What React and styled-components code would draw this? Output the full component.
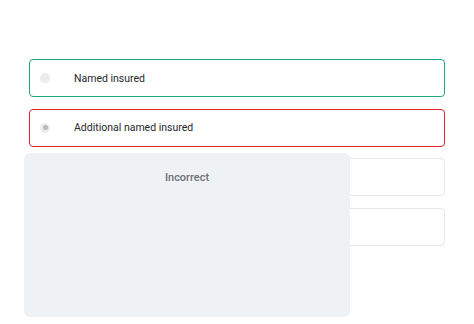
import React from "react";
import styled, { createGlobalStyle } from "styled-components";

const GlobalStyle = createGlobalStyle`
  html, body {
    margin: 0;
    padding: 0;
    background: #ffffff;
    font-family: Roboto, "Liberation Sans", sans-serif;
  }
`;

const Page = styled.div`
  position: relative;
  width: 474px;
  height: 324px;
  overflow: hidden;
  background: #fff;
`;

const OptionList = styled.div`
  display: flex;
  flex-direction: column;
  gap: 11.5px;
  padding: 59px 0 0 29px;
  width: 416px;
`;

const borderColors = {
  correct: "#20a57c",
  wrong: "#e0242e",
  idle: "#e6e8eb",
};

const Option = styled.div`
  box-sizing: border-box;
  height: 38px;
  display: flex;
  align-items: center;
  gap: 24px;
  padding-left: 10px;
  border: ${(p) => (p.$state === "idle" ? "1.5px" : "1.6px")} solid
    ${(p) => borderColors[p.$state]};
  border-radius: 4px;
  background: #fff;
`;

const Radio = styled.span`
  width: 10px;
  height: 10px;
  border-radius: 50%;
  background: #ececec;
  display: flex;
  align-items: center;
  justify-content: center;

  &::after {
    content: "";
    width: 5px;
    height: 5px;
    border-radius: 50%;
    background: ${(p) => (p.$checked ? "#b9b9b9" : "transparent")};
  }
`;

const Label = styled.span`
  font-size: 10.5px;
  color: #26282b;
`;

const FeedbackPanel = styled.div`
  position: absolute;
  left: 24px;
  top: 153px;
  width: 326px;
  height: 164px;
  border-radius: 6px;
  background: #eef2f5;
  display: flex;
  justify-content: center;
  padding-top: 18px;
  box-sizing: border-box;
`;

const FeedbackTitle = styled.span`
  font-size: 11px;
  font-weight: 500;
  color: #6c7074;
  line-height: 13px;
`;

const options = [
  { label: "Named insured", state: "correct", checked: false },
  { label: "Additional named insured", state: "wrong", checked: true },
  { label: "", state: "idle", checked: false },
  { label: "", state: "idle", checked: false },
];

const App = () => {
  return (
    <Page>
      <GlobalStyle />
      <OptionList>
        {options.map((o, i) => (
          <Option key={i} $state={o.state}>
            <Radio $checked={o.checked} />
            <Label>{o.label}</Label>
          </Option>
        ))}
      </OptionList>
      <FeedbackPanel>
        <FeedbackTitle>Incorrect</FeedbackTitle>
      </FeedbackPanel>
    </Page>
  );
};

export default App;
